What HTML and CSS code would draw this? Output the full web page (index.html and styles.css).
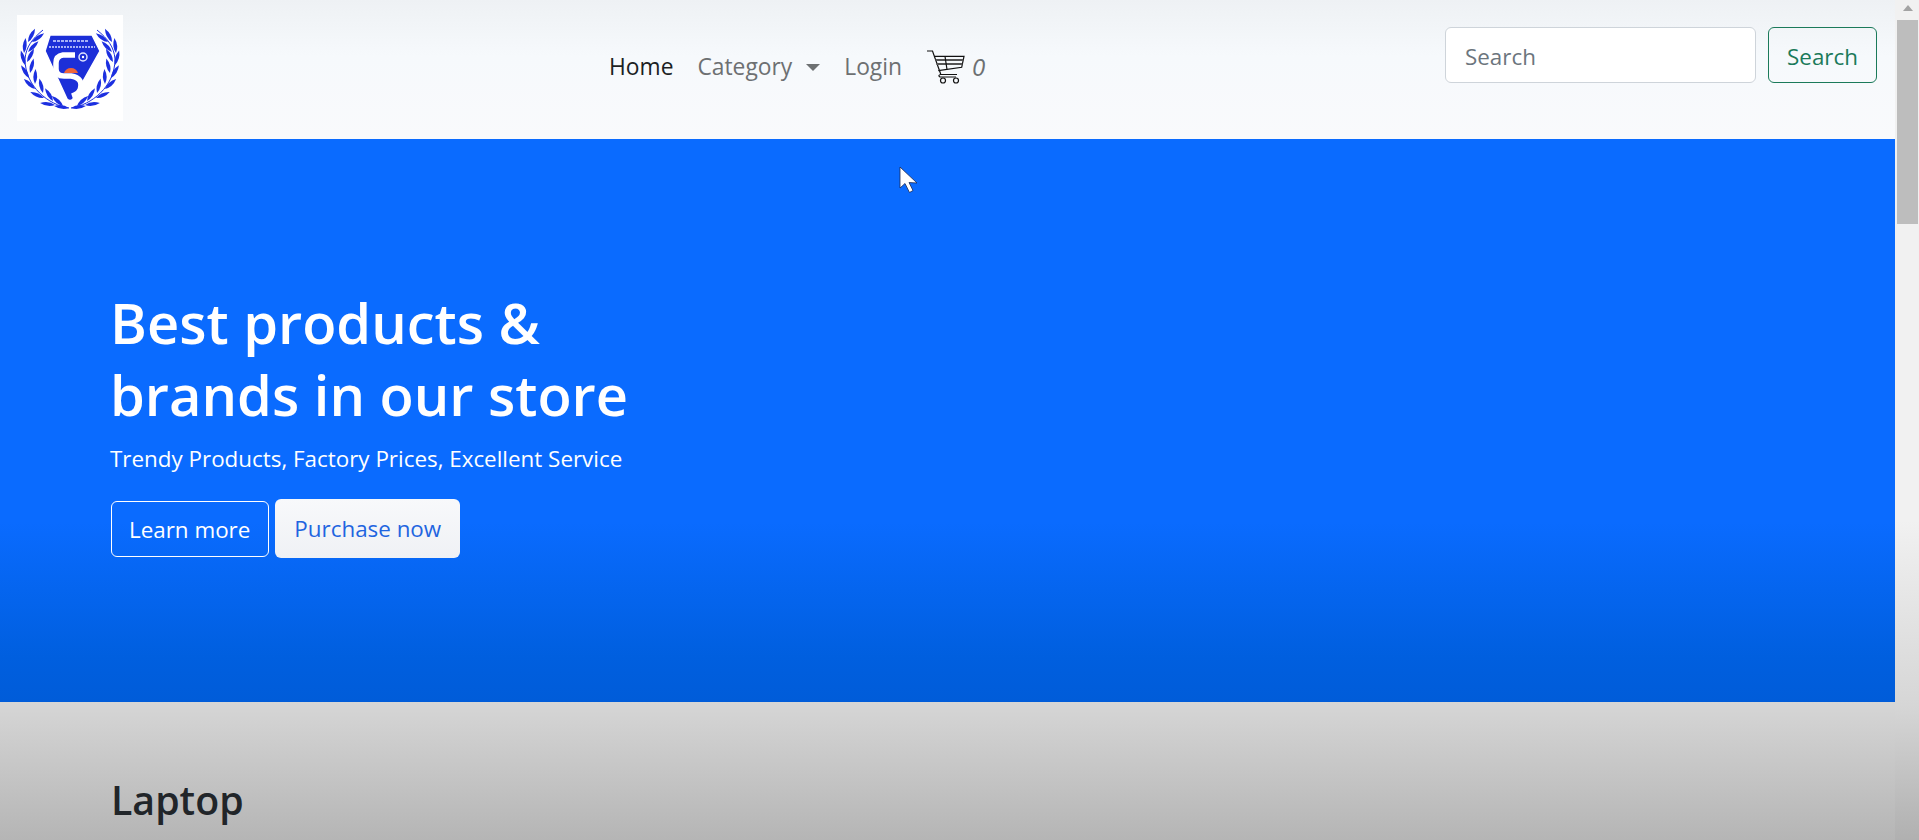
FILE: index.html
```html
<!DOCTYPE html>
<html lang="en">
<head>
    <meta charset="UTF-8">
    <title>Store</title>
    <link rel="stylesheet" href="styles.css">
</head>
<body>
    <div class="page">
        <nav class="navbar">
            <a class="brand" href="#">
                <svg class="logo" viewBox="0 0 106 106" aria-label="Logo">
                    <defs>
                        <path id="leaf" d="M0 0 Q7 -3.800 15 0 Q7 3.800 0 0 Z" fill="#1c2fe0"/>
                        <g id="branch">
                            <path d="M52 93 C32 90 8 72 8 44 C9 32 15 24 26 15" fill="none" stroke="#1c2fe0" stroke-width="1"/>
                            <use href="#leaf" transform="translate(52 93) rotate(-172)"/>
                            <use href="#leaf" transform="translate(46 91) rotate(-138)"/>
                            <use href="#leaf" transform="translate(38 90) rotate(-172)"/>
                            <use href="#leaf" transform="translate(36 86) rotate(-122)"/>
                            <use href="#leaf" transform="translate(27 83) rotate(-156)"/>
                            <use href="#leaf" transform="translate(26 78) rotate(-104)"/>
                            <use href="#leaf" transform="translate(18 74) rotate(-138)"/>
                            <use href="#leaf" transform="translate(18 69) rotate(-88)"/>
                            <use href="#leaf" transform="translate(12 63) rotate(-122)"/>
                            <use href="#leaf" transform="translate(13 58) rotate(-76)"/>
                            <use href="#leaf" transform="translate(8 50) rotate(-106)"/>
                            <use href="#leaf" transform="translate(10 47) rotate(-62)"/>
                            <use href="#leaf" transform="translate(7 38) rotate(-84)"/>
                            <use href="#leaf" transform="translate(11 37) rotate(-46)"/>
                            <use href="#leaf" transform="translate(11 27) rotate(-62)"/>
                            <use href="#leaf" transform="translate(15 27) rotate(-36)"/>
                        </g>
                    </defs>
                    <rect width="106" height="106" fill="#fff"/>
                    <use href="#branch"/>
                    <use href="#branch" transform="matrix(-1 0 0 1 106 0)"/>
                    <path d="M33 20 H75 L83 36 L56 84 Q53 87 50 84 L28 36 Z" fill="#1c2fd8" stroke="#fff" stroke-width="1.500"/>
                    <path d="M36 26 H72" stroke="#d5dbff" stroke-width="1.500" stroke-dasharray="3 1"/>
                    <path d="M32 32 H78" stroke="#d5dbff" stroke-width="1.500" stroke-dasharray="2 1"/>
                    <path d="M58 40 H46 Q39 41 39 48 V54 Q39 61 47 61 H54 Q67 63 63 75 Q61 79 55 81" fill="none" stroke="#fff" stroke-width="5.500"/>
                    <path d="M47 58 H61 Q59 53 54 53 Q49 53 47 58 Z" fill="#f0653a"/>
                    <circle cx="66" cy="42" r="4" fill="none" stroke="#dfe4ff" stroke-width="1.500"/>
                    <circle cx="66" cy="42" r="1.200" fill="#fff"/>
                </svg>
            </a>
            <ul class="nav-links">
                <li><a class="nav-link active" href="#">Home</a></li>
                <li><a class="nav-link dropdown" href="#">Category</a></li>
                <li><a class="nav-link" href="#">Login</a></li>
                <li>
                    <a class="nav-link cart" href="#">
                        <svg class="cart-icon" viewBox="0 0 40 34" fill="none" stroke="#111" stroke-width="1.200">
                            <path d="M1 1 H6.500 L14.700 24"/>
                            <path d="M8 6.300 H38 L35.700 17.300 L12.300 20.700"/>
                            <path d="M9.500 10 H37.200 M10.500 14 H36.300" stroke="#555" stroke-width="1.800"/>
                            <path d="M19 6.300 L21 19.500"/>
                            <path d="M31 24.500 H14.500 Q11.500 25.500 14 27 H30"/>
                            <circle cx="17" cy="30.500" r="2.500"/>
                            <circle cx="30" cy="30.500" r="2.500"/>
                        </svg>
                        <em>0</em>
                    </a>
                </li>
            </ul>
            <form class="search-form">
                <input class="search-input" type="search" placeholder="Search">
                <button class="btn-search" type="submit">Search</button>
            </form>
        </nav>

        <section class="hero">
            <h1>Best products &amp;<br>brands in our store</h1>
            <p class="lead">Trendy Products, Factory Prices, Excellent Service</p>
            <div class="hero-buttons">
                <a class="btn btn-outline" href="#">Learn more</a>
                <a class="btn btn-light" href="#">Purchase now</a>
            </div>
        </section>

        <section class="products">
            <h2>Laptop</h2>
        </section>
    </div>

    <div class="scrollbar">
        <span class="scroll-up"></span>
        <div class="scroll-thumb"></div>
    </div>

    <svg class="cursor" viewBox="0 0 19 28">
        <path d="M1 1 V22 L6 17.500 L10.500 26.500 L14 24.500 L10 16.500 L18 17 Z" fill="#fff" stroke="#1a2a55" stroke-width="0.800"/>
    </svg>
</body>
</html>
```

FILE: styles.css
```css
* {
    box-sizing: border-box;
}

html,
body {
    height: 100%;
}

body {
    margin: 0;
    display: flex;
    overflow: hidden;
    font-family: "Open Sans", "Noto Sans", sans-serif;
    font-size: 22.4px;
    color: #212529;
}

.page {
    flex: 1;
    min-width: 0;
}

a {
    text-decoration: none;
}

.navbar {
    height: 139px;
    padding: 15px 18px 0 17px;
    display: flex;
    align-items: flex-start;
    background: linear-gradient(#eef1f4, #f6f9fc 40%, #f9fafc);
}

.logo {
    display: block;
    width: 106px;
    height: 106px;
}

.nav-links {
    list-style: none;
    display: flex;
    align-items: center;
    gap: 24px;
    margin: 34px 0 0 486px;
    padding: 0;
}

.nav-link {
    display: flex;
    align-items: center;
    font-size: 22.8px;
    color: #6d7072;
    line-height: 36px;
}

.nav-link.active {
    color: #1c1f23;
}

.dropdown::after {
    content: "";
    margin-left: 14px;
    border-top: 7px solid #6d7072;
    border-left: 7px solid transparent;
    border-right: 7px solid transparent;
}

.cart-icon {
    width: 40px;
    height: 34px;
}

.cart em {
    margin-left: 6px;
    font-size: 24px;
}

.search-form {
    margin-left: auto;
    margin-top: 12px;
    display: flex;
    gap: 12px;
}

.search-input {
    width: 311px;
    height: 56px;
    padding: 2px 19px 0;
    font: inherit;
    border: 1px solid #ced4da;
    border-radius: 6px;
    background-color: #fff;
}

.search-input::placeholder {
    color: #6c757d;
}

.btn-search {
    width: 109px;
    height: 56px;
    padding: 2px 0 0;
    font: inherit;
    color: #1b7a5a;
    background: transparent;
    border: 1px solid #1b7a5a;
    border-radius: 6px;
}

.hero {
    height: 563px;
    padding: 147px 0 0 110px;
    color: #fff;
    background: linear-gradient(#0a6bff 68%, #005fdf 92%, #005cd9);
}

.hero h1 {
    margin: 0;
    font-size: 56px;
    font-weight: 600;
    line-height: 72px;
}

.lead {
    margin: 11px 0 22px;
    line-height: 36px;
}

.hero-buttons {
    display: flex;
    align-items: center;
    gap: 6px;
    margin-left: 1px;
}

.btn {
    display: block;
    border-radius: 6px;
}

.btn-outline {
    height: 56px;
    padding: 0 18px 0 17px;
    line-height: 56px;
    color: #fff;
    border: 1px solid #fff;
}

.btn-light {
    height: 59px;
    padding: 0 19px;
    line-height: 60px;
    color: #1f65e0;
    background: linear-gradient(#f8f9fb, #eff1f5);
}

.products {
    height: 138px;
    padding: 74px 0 0 111px;
    background: linear-gradient(#d6d6d6, #b5b5b5);
}

.products h2 {
    margin: 0;
    font-size: 39.3px;
    font-weight: 600;
    line-height: 48px;
}

.scrollbar {
    width: 24px;
    flex: none;
    padding: 0 1px 0 2px;
    background: linear-gradient(#f1f1f1 62%, #d6d6d6 84%, #b0b0b0);
}

.scroll-up {
    display: block;
    width: 0;
    margin: 5px auto 0;
    border-bottom: 6px solid #a3a3a3;
    border-left: 5.500px solid transparent;
    border-right: 5.500px solid transparent;
}

.scroll-thumb {
    height: 204px;
    margin-top: 9px;
    background-color: #bdbdbd;
}

.cursor {
    position: absolute;
    left: 899px;
    top: 166px;
    width: 19px;
    height: 28px;
}
```
